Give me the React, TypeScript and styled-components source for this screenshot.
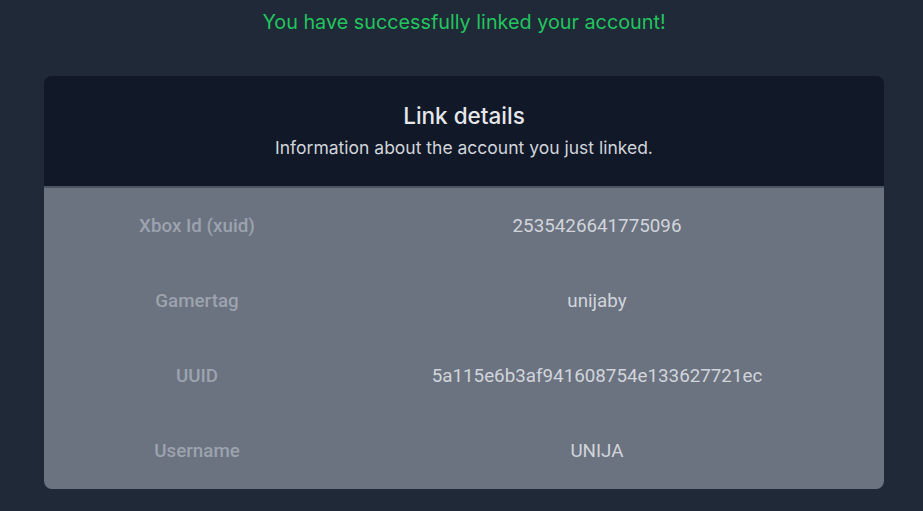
import styled, { createGlobalStyle } from "styled-components";

const GlobalStyle = createGlobalStyle`
  html, body {
    margin: 0;
    padding: 0;
    background-color: #1f2937;
  }
  body {
    font-family: Inter, "Noto Sans", sans-serif;
  }
`;

const rows = [
  { label: "Xbox Id (xuid)", value: "2535426641775096" },
  { label: "Gamertag", value: "unijaby" },
  { label: "UUID", value: "5a115e6b3af941608754e133627721ec" },
  { label: "Username", value: "UNIJA" },
];

export default function App() {
  return (
    <Page>
      <GlobalStyle />
      <SuccessText>You have successfully linked your account!</SuccessText>
      <Card>
        <CardHeader>
          <Title>Link details</Title>
          <Subtitle>Information about the account you just linked.</Subtitle>
        </CardHeader>
        <CardBody>
          {rows.map((row) => (
            <Row key={row.label}>
              <Label>{row.label}</Label>
              <Value>{row.value}</Value>
            </Row>
          ))}
        </CardBody>
      </Card>
    </Page>
  );
}

const Page = styled.div`
  min-height: 511px;
  display: flex;
  flex-direction: column;
  align-items: center;
  padding: 9px 0 0 5px;
  box-sizing: border-box;
`;

const SuccessText = styled.p`
  margin: 0;
  color: #22c55e;
  font-size: 19.8px;
  line-height: 26px;
`;

const Card = styled.div`
  margin-top: 41px;
  width: 840px;
  border-radius: 8px;
  overflow: hidden;
`;

const CardHeader = styled.div`
  background-color: #111827;
  text-align: center;
  padding: 26px 16px;
  border-bottom: 2px solid #4b5563;
`;

const Title = styled.h2`
  margin: 0;
  color: #e5e7eb;
  font-size: 22.5px;
  font-weight: 500;
  line-height: 28px;
`;

const Subtitle = styled.p`
  margin: 6px 0 0;
  color: #d1d5db;
  font-size: 17.5px;
  line-height: 24px;
`;

const CardBody = styled.div`
  background-color: #6b7280;
`;

const Row = styled.div`
  display: grid;
  grid-template-columns: 306px 494px;
  align-items: center;
  height: 75.25px;
  font-family: Roboto, "Liberation Sans", sans-serif;
  font-size: 18.8px;
`;

const Label = styled.div`
  text-align: center;
  color: #9ca3af;
  font-weight: 500;
`;

const Value = styled.div`
  text-align: center;
  color: #d1d5db;
`;
